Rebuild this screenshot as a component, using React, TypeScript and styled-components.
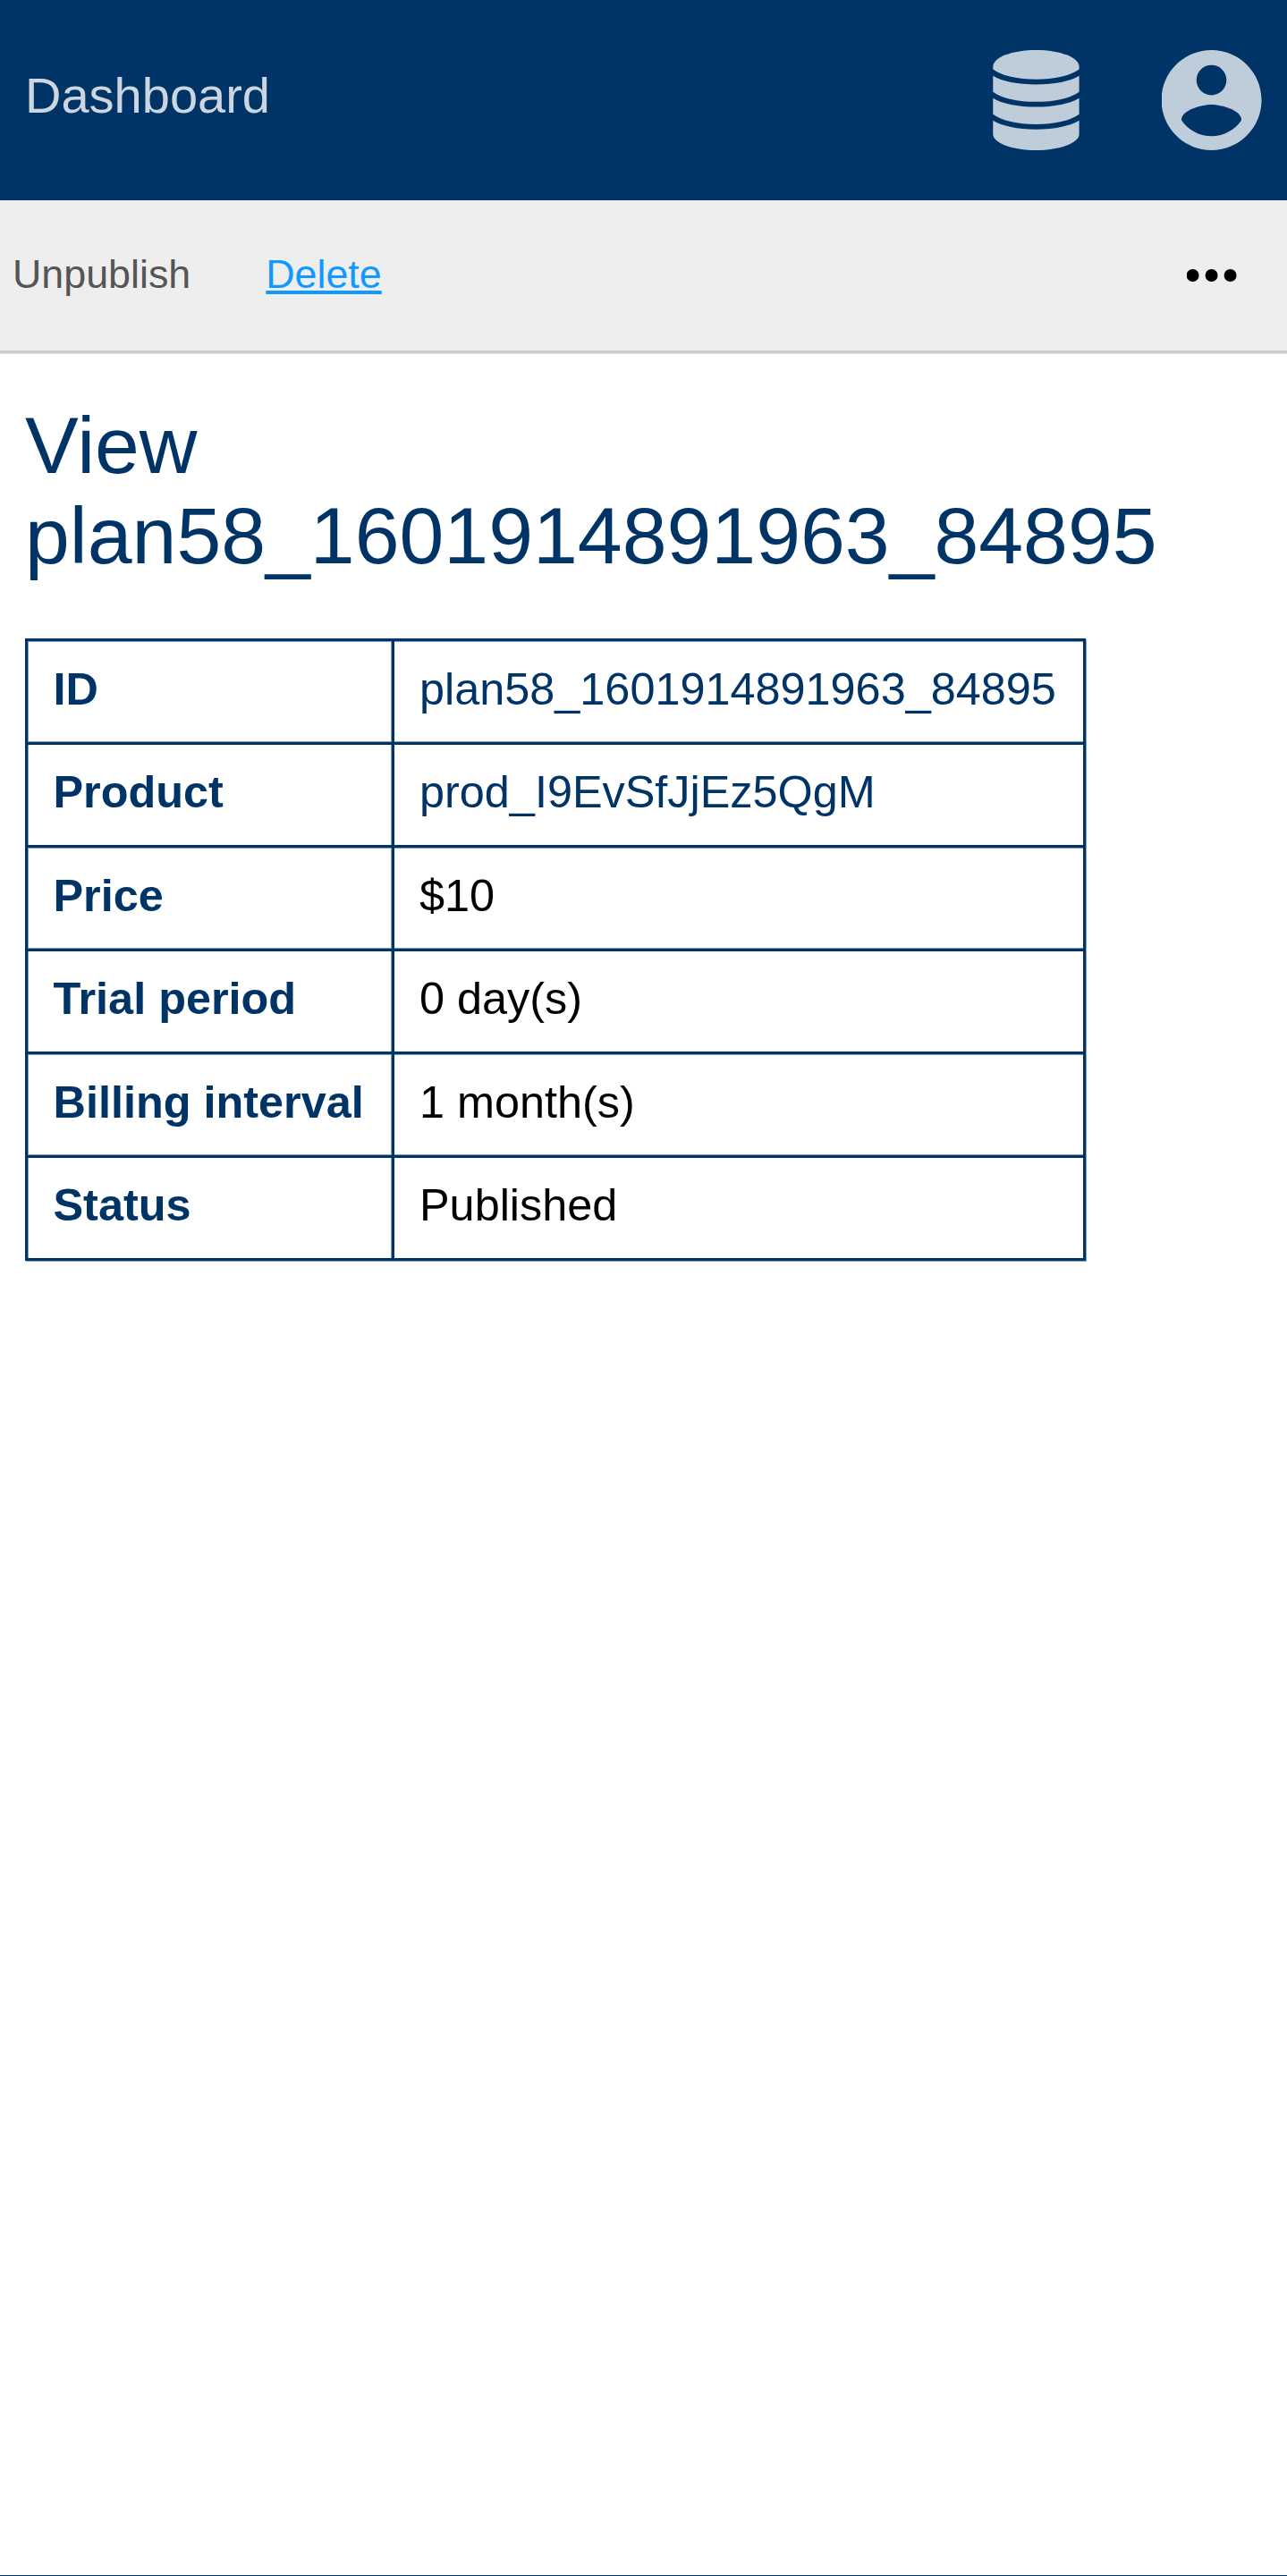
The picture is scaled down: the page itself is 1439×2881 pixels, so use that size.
import React from 'react';
import styled, { createGlobalStyle, css } from 'styled-components';

const navy = '#003366';
const softNavy = '#8099b2';

const GlobalStyle = createGlobalStyle`
  * { box-sizing: border-box; }
  body {
    margin: 0;
    background: #fff;
    font-family: "Liberation Sans", Arial, sans-serif;
  }
`;

const Page = styled.div`
  height: 2881px;
  display: flex;
  flex-direction: column;
  border-bottom: 1px solid ${navy};
`;

const Header = styled.header`
  height: 224px;
  padding: 0 28px;
  display: flex;
  align-items: center;
  justify-content: space-between;
  background: ${navy};
`;

const HomeLink = styled.a`
  padding-bottom: 11px;
  font-size: 56px;
  line-height: 64px;
  color: #ccd6e0;
`;

const HeaderMenus = styled.nav`
  display: flex;
  align-items: center;
  gap: 92px;
`;

const MenuIcon = styled.svg`
  display: block;
  height: 112px;
  fill: #bfccd9;
`;

const ToolbarWrap = styled.div`
  border-bottom: 1px solid #e5e5e5;
`;

const Toolbar = styled.nav`
  height: 171px;
  display: flex;
  align-items: center;
  gap: 84px;
  padding: 0 56px 4px 14px;
  background: #eee;
  border-bottom: 3px solid #ccc;
`;

const ToolbarLink = styled.a<{ $active?: boolean }>`
  font-size: 44.8px;
  line-height: 52px;
  color: ${(p) => (p.$active ? '#1199ff' : '#555')};
  text-decoration: ${(p) => (p.$active ? 'underline' : 'none')};
  text-decoration-thickness: 4px;
  text-decoration-skip-ink: none;
  text-underline-offset: 3px;
`;

const MoreIcon = styled.svg`
  display: block;
  width: 56px;
  height: 14px;
  margin: 4px 0 0 auto;
`;

const Content = styled.main`
  padding: 51.5px 28px 0;
`;

const Title = styled.h1`
  margin: 0 0 64.5px;
  font-size: 89.6px;
  font-weight: 400;
  line-height: 101px;
  color: ${navy};
`;

const Details = styled.dl`
  width: 1186px;
  margin: 0;
  border: solid ${navy};
  border-width: 0 3px 3px;
  box-shadow: 1px 1px 0 ${softNavy};
`;

const Row = styled.div<{ $tall: boolean }>`
  display: grid;
  grid-template-columns: 410px 1fr;
  height: ${(p) => (p.$tall ? 116 : 115)}px;
  border-top: 3px solid ${navy};
  line-height: ${(p) => (p.$tall ? 59 : 57)}px;
  ${(p) =>
    p.$tall &&
    css`
      box-shadow: inset 0 1px 0 ${softNavy}, inset 0 -1px 0 ${softNavy};
    `}
`;

const Label = styled.dt`
  padding: 24px 0 0 28.5px;
  border-right: 3px solid ${navy};
  box-shadow: inset 1px 0 0 ${softNavy}, inset -1px 0 0 ${softNavy};
  font-size: 50.4px;
  font-weight: 700;
  color: ${navy};
  white-space: nowrap;
`;

const Value = styled.dd<{ $link?: boolean }>`
  margin: 0;
  padding: 24px 0 0 28px;
  font-size: 50.4px;
  color: ${(p) => (p.$link ? navy : '#000')};
`;

const rows = [
  { label: 'ID', value: 'plan58_1601914891963_84895', link: true },
  { label: 'Product', value: 'prod_I9EvSfJjEz5QgM', link: true },
  { label: 'Price', value: '$10' },
  { label: 'Trial period', value: '0 day(s)' },
  { label: 'Billing interval', value: '1 month(s)' },
  { label: 'Status', value: 'Published' },
];

export default function App() {
  return (
    <>
      <GlobalStyle />
      <Page>
        <Header>
          <HomeLink>Dashboard</HomeLink>
          <HeaderMenus>
            <MenuIcon width="97" viewBox="0 0 97 112">
              <path d="M.3 18.5C.3 8 22 0 48.4 0S96.6 8 96.6 18.5V21.5C87 28.5 69 32.8 48.4 32.8S9.5 28.5.3 21.5Z" />
              <path d="M.3 28.7C10 35 28 38.4 48.4 38.4S86.5 35 96.6 28.7V46.7C87 54 69 57.8 48.4 57.8S9.5 54 .3 46.7Z" />
              <path d="M.3 53.8C10 60 28 63.6 48.4 63.6S86.5 60 96.6 53.8V71.8C87 79 69 82.9 48.4 82.9S9.5 79 .3 71.8Z" />
              <path d="M.3 78.8C10 85 28 88.7 48.4 88.7S86.5 85 96.6 78.8V94C96.6 104 75 112 48.4 112S.3 104 .3 94Z" />
            </MenuIcon>
            <MenuIcon width="112" viewBox="2.08 2 20 20">
              <path d="M12 2C6.48 2 2 6.48 2 12s4.48 10 10 10 10-4.48 10-10S17.52 2 12 2zm0 3c1.66 0 3 1.34 3 3s-1.34 3-3 3-3-1.34-3-3 1.34-3 3-3zm0 14.2c-2.5 0-4.71-1.28-6-3.22.03-1.99 4-3.08 6-3.08 1.99 0 5.97 1.09 6 3.08-1.29 1.94-3.5 3.22-6 3.22z" />
            </MenuIcon>
          </HeaderMenus>
        </Header>
        <ToolbarWrap>
          <Toolbar>
            <ToolbarLink>Unpublish</ToolbarLink>
            <ToolbarLink $active>Delete</ToolbarLink>
            <MoreIcon viewBox="0.4 0 56 14">
              <circle cx="7" cy="7" r="7" />
              <circle cx="28" cy="7" r="7" />
              <circle cx="49" cy="7" r="7" />
            </MoreIcon>
          </Toolbar>
        </ToolbarWrap>
        <Content>
          <Title>View plan58_1601914891963_84895</Title>
          <Details>
            {rows.map((row, index) => (
              <Row key={row.label} $tall={index % 2 === 0}>
                <Label>{row.label}</Label>
                <Value $link={row.link}>{row.value}</Value>
              </Row>
            ))}
          </Details>
        </Content>
      </Page>
    </>
  );
}
